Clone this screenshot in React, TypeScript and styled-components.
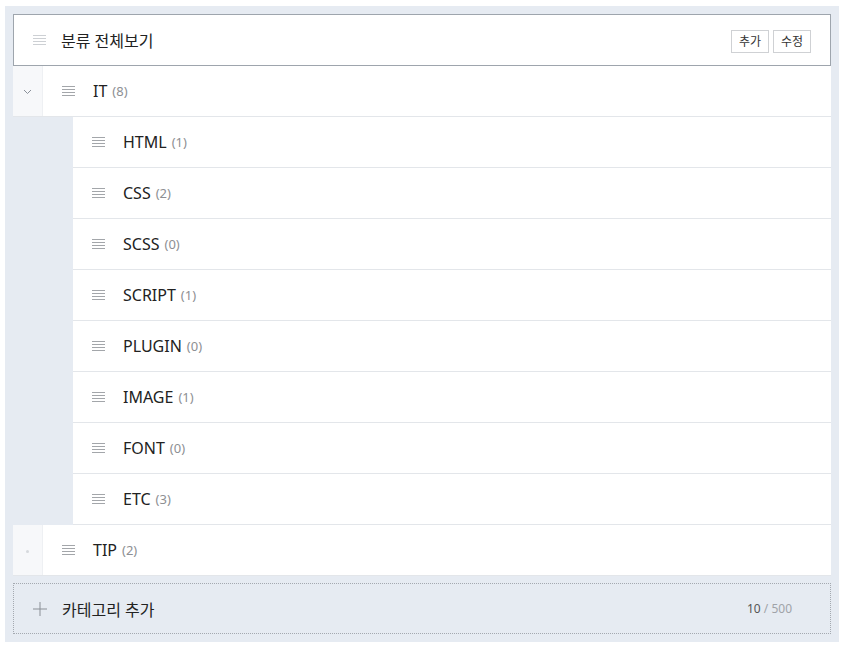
import styled, { createGlobalStyle } from "styled-components";

interface ICategory {
  name: string;
  count: number;
}

const children: ICategory[] = [
  { name: "HTML", count: 1 },
  { name: "CSS", count: 2 },
  { name: "SCSS", count: 0 },
  { name: "SCRIPT", count: 1 },
  { name: "PLUGIN", count: 0 },
  { name: "IMAGE", count: 1 },
  { name: "FONT", count: 0 },
  { name: "ETC", count: 3 },
];

const DragHandle = ({ light }: { light?: boolean }) => (
  <HandleStyle $light={light}>
    <span />
    <span />
    <span />
    <span />
  </HandleStyle>
);

const App = () => {
  return (
    <>
      <GlobalStyle />
      <Panel>
        <Header>
          <DragHandle light />
          <HeaderTitle>분류 전체보기</HeaderTitle>
          <HeaderButtons>
            <SmallButton>추가</SmallButton>
            <SmallButton>수정</SmallButton>
          </HeaderButtons>
        </Header>

        <Group>
          <ParentRow>
            <Toggle>
              <svg width="9" height="6" viewBox="0 0 9 6">
                <path d="M1 1l3.5 3.5L8 1" fill="none" stroke="#8a9099" strokeWidth="1" />
              </svg>
            </Toggle>
            <RowBody>
              <DragHandle />
              <Name>IT</Name>
              <Count>(8)</Count>
            </RowBody>
          </ParentRow>
          <Children>
            {children.map((c) => (
              <ChildRow key={c.name}>
                <DragHandle />
                <Name>{c.name}</Name>
                <Count>({c.count})</Count>
              </ChildRow>
            ))}
          </Children>
          <ParentRow>
            <Toggle>
              <Dot />
            </Toggle>
            <RowBody>
              <DragHandle />
              <Name>TIP</Name>
              <Count>(2)</Count>
            </RowBody>
          </ParentRow>
        </Group>

        <AddRow>
          <svg width="14" height="14" viewBox="0 0 14 14">
            <path d="M7 0v14M0 7h14" stroke="#8a8f96" strokeWidth="1" />
          </svg>
          <AddLabel>카테고리 추가</AddLabel>
          <Limit>
            <Current>10</Current> / 500
          </Limit>
        </AddRow>
      </Panel>
    </>
  );
};

const GlobalStyle = createGlobalStyle`
  body {
    margin: 0;
    background: #fff;
    font-family: "Noto Sans", "Noto Sans CJK KR", sans-serif;
    color: #222;
  }
`;

const Panel = styled.div`
  margin: 6px 0 0 5px;
  width: 834px;
  box-sizing: border-box;
  padding: 8px;
  background: #e6ebf2;
  display: flex;
  flex-direction: column;
`;

const HandleStyle = styled.div<{ $light?: boolean }>`
  width: 13px;
  display: flex;
  flex-direction: column;
  gap: 2px;
  flex-shrink: 0;

  span {
    display: block;
    height: 1px;
    background: ${({ $light }) => ($light ? "#cdd0d4" : "#a3a6aa")};
  }
`;

const Header = styled.div`
  height: 52px;
  box-sizing: border-box;
  border: 1px solid #9ea5ad;
  background: #fff;
  display: flex;
  align-items: center;
  padding: 0 19px;
`;

const HeaderTitle = styled.span`
  margin-left: 15px;
  font-size: 16px;
  font-weight: 400;
  color: #222;
`;

const HeaderButtons = styled.div`
  margin-left: auto;
  display: flex;
  gap: 4px;
  padding-top: 2px;
`;

const SmallButton = styled.button`
  height: 23px;
  width: 38px;
  padding: 0;
  border: 1px solid #cfd1d4;
  background: #fff;
  font-family: "Noto Sans", "Noto Sans CJK KR", sans-serif;
  font-size: 12px;
  color: #333;
`;

const Group = styled.div`
  display: flex;
  flex-direction: column;
`;

const ParentRow = styled.div`
  height: 51px;
  box-sizing: border-box;
  border-bottom: 1px solid #e3e6ea;
  background: #fff;
  display: flex;
`;

const Toggle = styled.div`
  width: 30px;
  flex-shrink: 0;
  background: #f7f8fa;
  border-right: 1px solid #eef0f3;
  display: flex;
  align-items: center;
  justify-content: center;
  padding-top: 2px;
  box-sizing: border-box;
`;

const Dot = styled.span`
  width: 3px;
  height: 3px;
  border-radius: 50%;
  background: #d6d9dd;
`;

const RowBody = styled.div`
  flex: 1;
  display: flex;
  align-items: center;
  padding-left: 19px;
`;

const Children = styled.div`
  margin-left: 60px;
  display: flex;
  flex-direction: column;
`;

const ChildRow = styled.div`
  height: 51px;
  box-sizing: border-box;
  border-bottom: 1px solid #e3e6ea;
  background: #fff;
  display: flex;
  align-items: center;
  padding-left: 19px;
`;

const Name = styled.span`
  margin-left: 18px;
  font-size: 16px;
  color: #222;
`;

const Count = styled.span`
  margin-left: 5px;
  font-size: 13px;
  color: #8d8f93;
`;

const AddRow = styled.div`
  margin-top: 7px;
  height: 51px;
  box-sizing: border-box;
  border: 1px dotted #a4a9b0;
  background: #e6ebf2;
  display: flex;
  align-items: center;
  padding: 0 38px 0 19px;
`;

const AddLabel = styled.span`
  margin-left: 15px;
  font-size: 16px;
  color: #222;
`;

const Limit = styled.span`
  margin-left: auto;
  font-size: 12px;
  color: #a0a3a8;
`;

const Current = styled.span`
  color: #555;
`;

export default App;
